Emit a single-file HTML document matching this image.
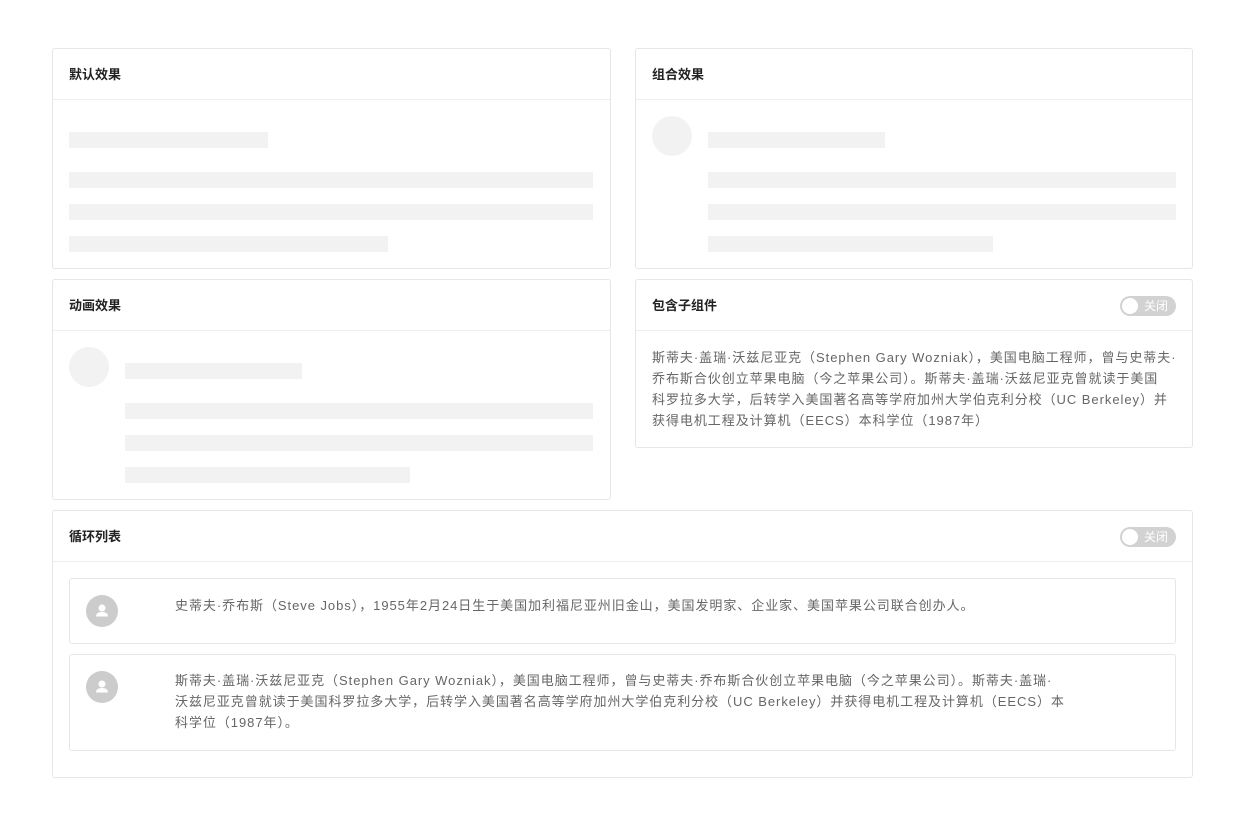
<!DOCTYPE html>
<html><head><meta charset="utf-8"><style>
body{margin:0;width:1256px;height:827px;background:#fff;font-family:"Liberation Sans","Noto Sans CJK SC",sans-serif;position:relative;overflow:hidden}
.c{position:absolute;border:1px solid #e6e6e6;border-radius:3px;box-sizing:border-box;background:#fff}
.h{position:absolute;left:0;right:0;top:0;height:50px;border-bottom:1px solid #eee;font-size:13px;font-weight:bold;color:#222;line-height:52px;padding-left:16px}
.b{position:absolute;background:#f2f2f2;height:16px}
.av{position:absolute;background:#f2f2f2;border-radius:50%;width:40px;height:40px}
.tg{position:absolute;right:16px;top:16px;width:56px;height:20px;border-radius:10px;background:#d2d2d2;color:#fff;font-size:12px;line-height:20px;text-align:right;padding-right:8px;box-sizing:border-box;font-weight:normal}
.tg:before{content:"";position:absolute;left:2px;top:2px;width:16px;height:16px;border-radius:50%;background:#fff}
.t{position:absolute;font-size:13px;color:#666;line-height:21px;white-space:nowrap;letter-spacing:0.95px}
.it{position:absolute;left:16px;right:16px;border:1px solid #e6e6e6;border-radius:3px;box-sizing:border-box}
.ua{position:absolute;left:16px;width:32px;height:32px;border-radius:50%;background:#ccc}
</style></head><body>
<div class="c" style="left:52px;top:48px;width:559px;height:221px"><div class="h">默认效果</div>
<div class="b" style="left:16px;top:83px;width:199px"></div>
<div class="b" style="left:16px;top:123px;width:524px"></div>
<div class="b" style="left:16px;top:155px;width:524px"></div>
<div class="b" style="left:16px;top:187px;width:319px"></div></div>
<div class="c" style="left:635px;top:48px;width:558px;height:221px"><div class="h">组合效果</div>
<div class="av" style="left:16px;top:67px"></div>
<div class="b" style="left:72px;top:83px;width:177px"></div>
<div class="b" style="left:72px;top:123px;width:468px"></div>
<div class="b" style="left:72px;top:155px;width:468px"></div>
<div class="b" style="left:72px;top:187px;width:285px"></div></div>
<div class="c" style="left:52px;top:279px;width:559px;height:221px"><div class="h">动画效果</div>
<div class="av" style="left:16px;top:67px"></div>
<div class="b" style="left:72px;top:83px;width:177px"></div>
<div class="b" style="left:72px;top:123px;width:468px"></div>
<div class="b" style="left:72px;top:155px;width:468px"></div>
<div class="b" style="left:72px;top:187px;width:285px"></div></div>
<div class="c" style="left:635px;top:279px;width:558px;height:169px"><div class="h">包含子组件<div class="tg">关闭</div></div>
<div class="t" style="left:16px;top:67px">斯蒂夫·盖瑞·沃兹尼亚克（Stephen Gary Wozniak），美国电脑工程师，曾与史蒂夫·<br>乔布斯合伙创立苹果电脑（今之苹果公司）。斯蒂夫·盖瑞·沃兹尼亚克曾就读于美国<br>科罗拉多大学，后转学入美国著名高等学府加州大学伯克利分校（UC Berkeley）并<br>获得电机工程及计算机（EECS）本科学位（1987年）</div></div>
<div class="c" style="left:52px;top:510px;width:1141px;height:268px"><div class="h">循环列表<div class="tg">关闭</div></div>
<div class="it" style="top:67px;height:66px"><div class="ua" style="top:16px"><svg width="32" height="32" viewBox="0 0 32 32"><circle cx="16" cy="13" r="3.5" fill="#fff"/><path d="M10 21.5h12c0-3-2.5-4.5-6-4.5s-6 1.5-6 4.5z" fill="#fff"/></svg></div><div class="t" style="left:105px;top:16px">史蒂夫·乔布斯（Steve Jobs），1955年2月24日生于美国加利福尼亚州旧金山，美国发明家、企业家、美国苹果公司联合创办人。</div></div>
<div class="it" style="top:143px;height:97px"><div class="ua" style="top:16px"><svg width="32" height="32" viewBox="0 0 32 32"><circle cx="16" cy="13" r="3.5" fill="#fff"/><path d="M10 21.5h12c0-3-2.5-4.5-6-4.5s-6 1.5-6 4.5z" fill="#fff"/></svg></div><div class="t" style="left:105px;top:15px">斯蒂夫·盖瑞·沃兹尼亚克（Stephen Gary Wozniak），美国电脑工程师，曾与史蒂夫·乔布斯合伙创立苹果电脑（今之苹果公司）。斯蒂夫·盖瑞·<br>沃兹尼亚克曾就读于美国科罗拉多大学，后转学入美国著名高等学府加州大学伯克利分校（UC Berkeley）并获得电机工程及计算机（EECS）本<br>科学位（1987年）。</div></div>
</div>
</body></html>
